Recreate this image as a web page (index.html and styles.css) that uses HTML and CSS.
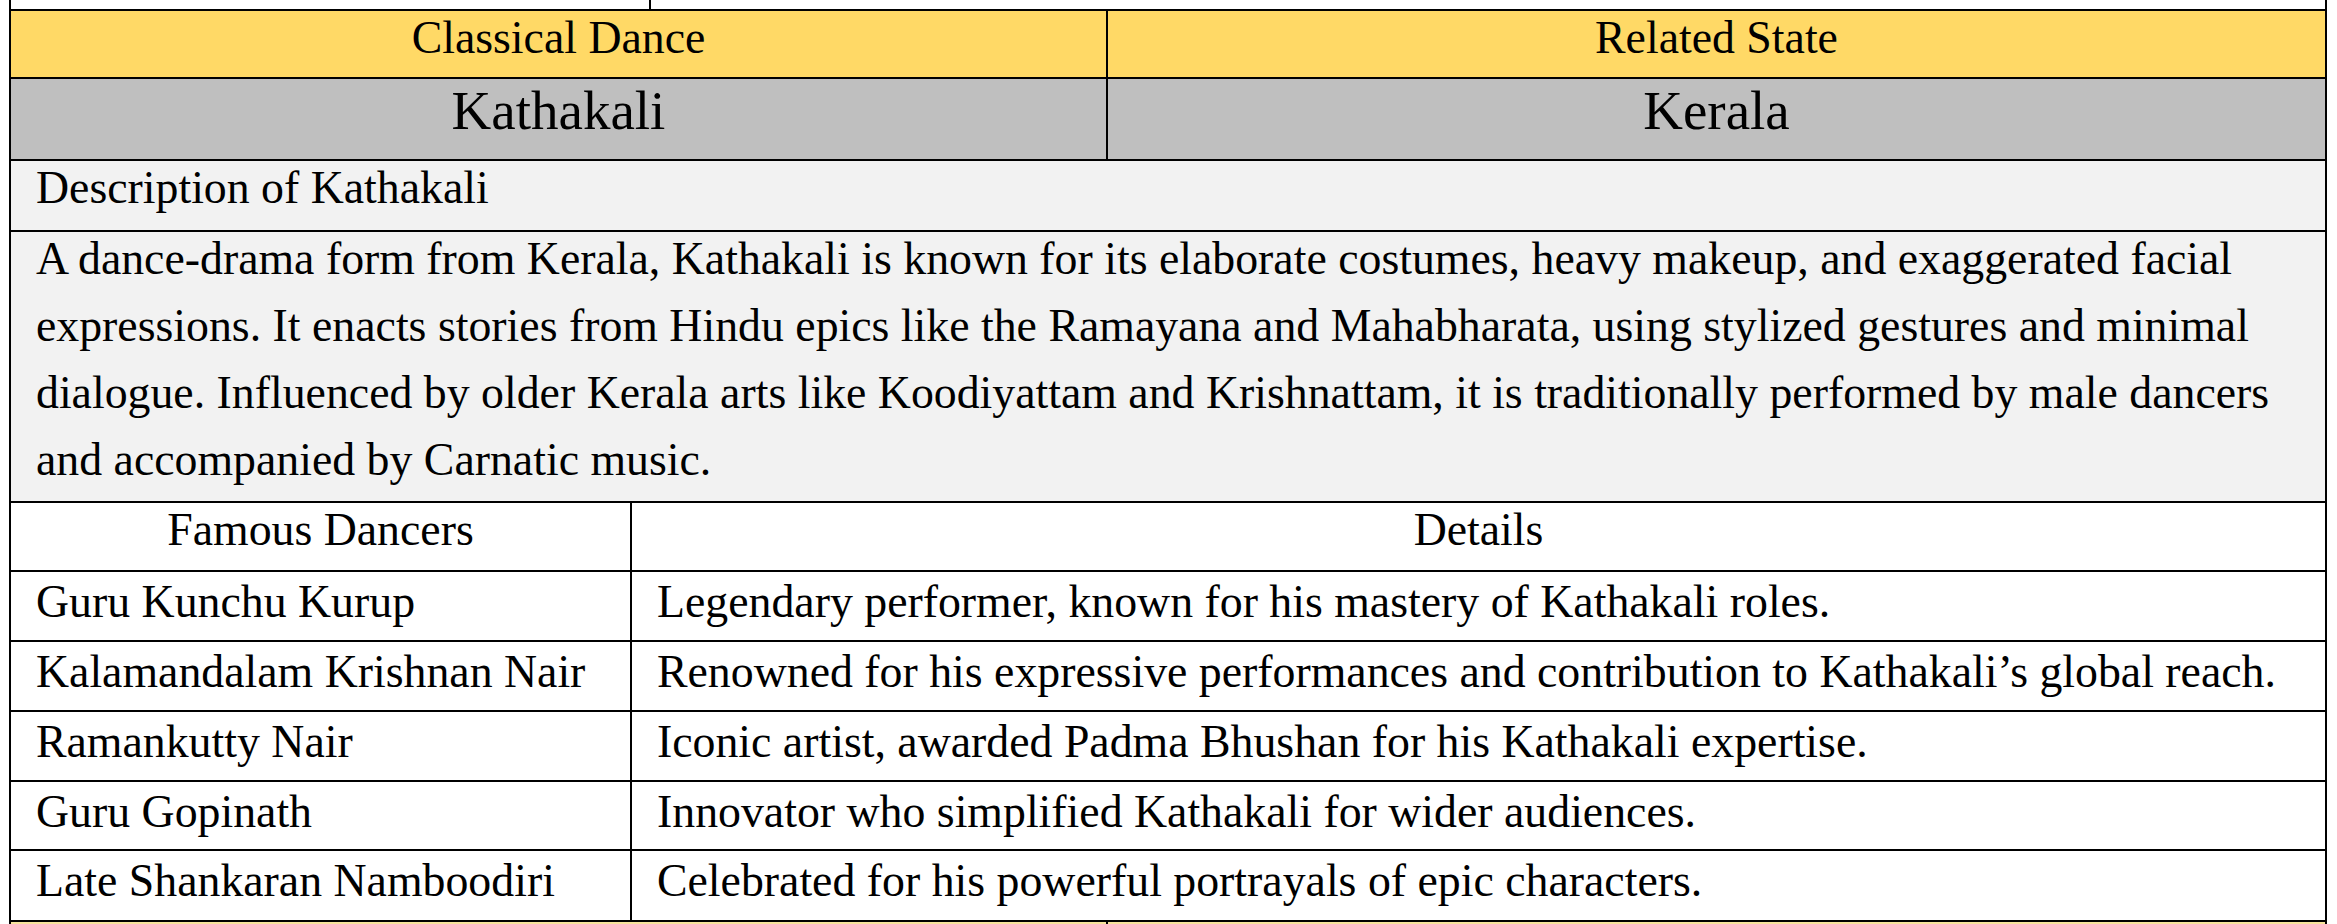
FILE: index.html
```html
<!DOCTYPE html>
<html lang="en">
<head>
<meta charset="utf-8">
<title>Kathakali</title>
<link rel="stylesheet" href="styles.css">
</head>
<body>
<div class="page">
  <div class="sheet">
    <div class="row split-top strip-top">
      <div class="cell blank"></div>
      <div class="cell blank"></div>
    </div>
    <div class="row split-main head">
      <div class="cell center">Classical Dance</div>
      <div class="cell center">Related State</div>
    </div>
    <div class="row split-main title">
      <div class="cell center">Kathakali</div>
      <div class="cell center">Kerala</div>
    </div>
    <div class="row single desc-title">
      <div class="cell">Description of Kathakali</div>
    </div>
    <div class="row single desc-body">
      <div class="cell"><p class="para">A dance-drama form from Kerala, Kathakali is known for its elaborate costumes, heavy makeup, and exaggerated facial expressions. It enacts stories from Hindu epics like the Ramayana and Mahabharata, using stylized gestures and minimal dialogue. Influenced by older Kerala arts like Koodiyattam and Krishnattam, it is traditionally performed by male dancers and accompanied by Carnatic music.</p></div>
    </div>
    <div class="row split-names names-head">
      <div class="cell center">Famous Dancers</div>
      <div class="cell center">Details</div>
    </div>
    <div class="row split-names entry h68">
      <div class="cell">Guru Kunchu Kurup</div>
      <div class="cell">Legendary performer, known for his mastery of Kathakali roles.</div>
    </div>
    <div class="row split-names entry h68">
      <div class="cell">Kalamandalam Krishnan Nair</div>
      <div class="cell">Renowned for his expressive performances and contribution to Kathakali’s global reach.</div>
    </div>
    <div class="row split-names entry h68">
      <div class="cell">Ramankutty Nair</div>
      <div class="cell">Iconic artist, awarded Padma Bhushan for his Kathakali expertise.</div>
    </div>
    <div class="row split-names entry h67">
      <div class="cell">Guru Gopinath</div>
      <div class="cell">Innovator who simplified Kathakali for wider audiences.</div>
    </div>
    <div class="row split-names entry h69">
      <div class="cell">Late Shankaran Namboodiri</div>
      <div class="cell">Celebrated for his powerful portrayals of epic characters.</div>
    </div>
    <div class="row split-main strip-bottom">
      <div class="cell blank"></div>
      <div class="cell blank"></div>
    </div>
  </div>
</div>
</body>
</html>
```

FILE: styles.css
```css
html, body {
  margin: 0;
  padding: 0;
  background: #ffffff;
}

.page {
  padding-left: 9px;
  width: 2318px;
}

.sheet {
  background: #000000;
  padding: 0 2px;
  height: 924px;
  overflow: hidden;
  display: flex;
  flex-direction: column;
  gap: 2px;
  font-family: "Liberation Serif", "Times New Roman", serif;
  font-size: 45.8px;
  color: #000000;
}

.row {
  display: grid;
  gap: 2px;
  flex-shrink: 0;
}

.split-top { grid-template-columns: 638px 1fr; }
.split-main { grid-template-columns: 1095px 1fr; }
.split-names { grid-template-columns: 619px 1fr; }
.single { grid-template-columns: 1fr; }

.cell {
  background: #ffffff;
  padding: 0 25px;
  white-space: nowrap;
  overflow: hidden;
}

.center { text-align: center; padding: 0; }

.strip-top { height: 9px; }
.strip-top .cell { background: #ffffff; }

.head { height: 66px; }
.head .cell { background: #ffd966; padding-top: 0; }

.title { height: 80px; }
.title .cell { background: #bfbfbf; font-size: 55px; }

.desc-title { height: 69px; }
.desc-title .cell { background: #f2f2f2; padding-top: 0; }

.desc-body { height: 269px; }
.desc-body .cell { background: #f2f2f2; white-space: normal; padding-right: 20px; }
.para {
  margin: -7px 0 0 0;
  line-height: 67px;
}

.names-head { height: 67px; }
.names-head .cell { padding-top: 0; }

.entry .cell { padding-top: 3px; }
.h67 { height: 67px; }
.h68 { height: 68px; }
.h69 { height: 69px; }

.strip-bottom { height: 20px; }
.strip-bottom .cell { background: #f7e39c; }
```
